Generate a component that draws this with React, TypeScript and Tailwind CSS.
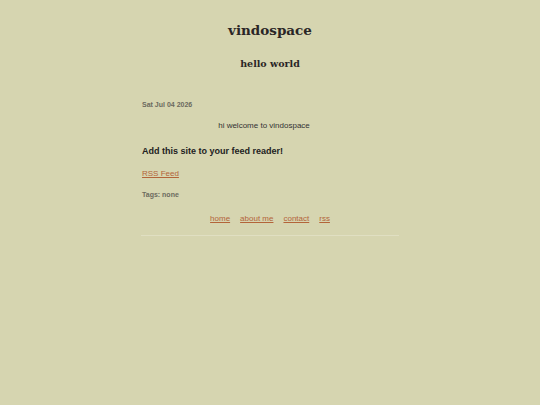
export default function App() {
  return (
    <div className="min-h-[405px] w-full bg-[#d6d5b0] font-['Liberation_Sans',Arial,sans-serif] text-[#2b2b2b]">
      <div className="mx-auto w-[258px] pt-[21px]">
        <header className="flex flex-col items-center">
          <h1 className="font-['DejaVu_Serif',serif] text-[13.5px] font-bold leading-[18px] text-[#2a2626]">vindospace</h1>
          <h2 className="mt-[18px] font-['DejaVu_Serif',serif] text-[9.5px] font-bold leading-[14px] text-[#2a2626]">hello world</h2>
        </header>
        <main className="mt-[29px] pl-px">
          <p className="text-[7px] font-bold leading-[9px] text-[#6b6a5e]">Sat Jul 04 2026</p>
          <p className="mt-[12px] pr-[13px] text-center text-[8px] leading-[10px] text-[#333]">hi welcome to vindospace</p>
          <h3 className="mt-[14px] text-[9px] font-bold leading-[12px] text-[#222]">Add this site to your feed reader!</h3>
          <a href="#" className="mt-[12px] inline-block text-[8px] leading-[10px] text-[#b3643a] underline">RSS Feed</a>
          <p className="mt-[7px] text-[7px] font-bold leading-[9px] text-[#6b6a5e]">Tags: none</p>
        </main>
        <nav className="mt-[15px] flex justify-center gap-[10px] text-[8px] leading-[10px]">
          <a href="#" className="text-[#b3643a] underline">home</a>
          <a href="#" className="text-[#b3643a] underline">about me</a>
          <a href="#" className="text-[#b3643a] underline">contact</a>
          <a href="#" className="text-[#b3643a] underline">rss</a>
        </nav>
        <hr className="mt-[11px] border-t border-[#e0dfc2]" />
      </div>
    </div>
  );
}
